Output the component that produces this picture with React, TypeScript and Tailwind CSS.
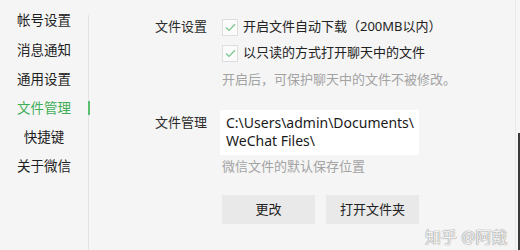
import React from "react";

const menu = ["帐号设置", "消息通知", "通用设置", "文件管理", "快捷键", "关于微信"];
const active = "文件管理";

function CheckBox() {
  return (
    <span className="w-[16px] h-[17px] shrink-0 border border-[#dedede] bg-[#fbfbfb] flex items-center justify-center">
      <svg width="11" height="9" viewBox="0 0 11 9" fill="none">
        <path d="M1 4.6 L4 7.4 L10 1.2" stroke="#7cc68c" strokeWidth="1.3" />
      </svg>
    </span>
  );
}

export default function App() {
  return (
    <div className="relative w-[520px] h-[250px] overflow-hidden bg-[#f5f5f5] flex font-['Noto_Sans','Noto_Sans_CJK_SC',sans-serif] text-[#222]">
      {/* sidebar */}
      <aside className="w-[88px] shrink-0 pt-[6px] flex flex-col">
        {menu.map((m) => (
          <div
            key={m}
            className={
              "h-[29.2px] flex items-center justify-center text-[13.5px] " +
              (m === active ? "text-[#3fae57]" : "text-[#1e1e1e]")
            }
          >
            {m}
          </div>
        ))}
      </aside>

      <div className="relative w-px shrink-0 mt-[15px] bg-[#e3e3e3]">
        <span className="absolute left-0 top-[86px] w-[2px] h-[14px] bg-[#5cbf6f]" />
      </div>

      {/* main */}
      <main className="flex-1 pl-[66px] pt-[17px] text-[13px]">
        <div className="flex">
          <div className="w-[67px] shrink-0 h-[20px] flex items-center text-[#2a2a2a]">文件设置</div>
          <div className="flex flex-col">
            <label className="h-[20px] flex items-center gap-[5px]">
              <CheckBox />
              <span>开启文件自动下载（200MB以内）</span>
            </label>
            <label className="mt-[6px] h-[20px] flex items-center gap-[5px]">
              <CheckBox />
              <span>以只读的方式打开聊天中的文件</span>
            </label>
            <p className="mt-[7px] h-[20px] flex items-center text-[#a3a3a3]">
              开启后，可保护聊天中的文件不被修改。
            </p>
          </div>
        </div>

        <div className="flex mt-[20px]">
          <div className="w-[65px] shrink-0 pt-[3px] text-[#2a2a2a]">文件管理</div>
          <div className="flex flex-col">
            <div className="w-[199px] h-[45px] bg-white pl-[6px] pt-[4px] text-[14px] leading-[18px] text-[#1a1a1a] whitespace-nowrap">
              C:\Users\admin\Documents\
              <br />
              WeChat Files\
            </div>
            <p className="mt-[3px] h-[18px] flex items-center pl-[2px] text-[#a3a3a3]">
              微信文件的默认保存位置
            </p>
            <div className="mt-[19px] flex gap-[11px] pl-[2px]">
              <button className="w-[93px] h-[29px] bg-[#e9e9e9] text-[#222] text-[13px]">更改</button>
              <button className="w-[93px] h-[29px] bg-[#e9e9e9] text-[#222] text-[13px]">打开文件夹</button>
            </div>
          </div>
        </div>
      </main>

      {/* window edge */}
      <div className="w-px shrink-0 bg-[#e9e9e9]" />
      <div className="w-[4px] shrink-0 flex flex-col">
        <div className="h-[133px]" />
        <div className="flex-1 ml-[2px] w-[2px] bg-[#3a3a3a]" />
      </div>

      {/* watermark */}
      <span className="absolute left-[425px] top-[226px] text-[16px] leading-[22px] text-[#f2f2f2] [text-shadow:0_0_1px_#8c8c8c,0_0_1px_#8c8c8c]">
        知乎 @阿戴
      </span>
    </div>
  );
}
